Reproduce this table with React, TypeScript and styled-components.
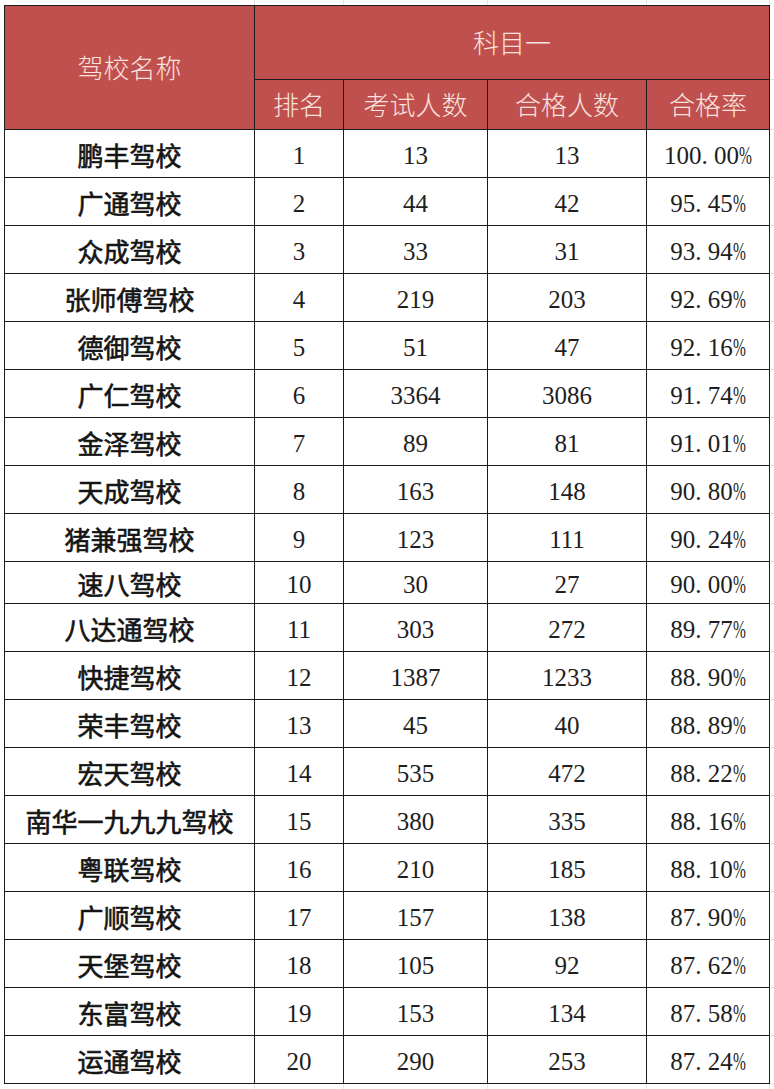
import styled, { createGlobalStyle } from 'styled-components'

// Data
const rows = [
  ['鹏丰驾校', 13, 13, '100.00%'],
  ['广通驾校', 44, 42, '95.45%'],
  ['众成驾校', 33, 31, '93.94%'],
  ['张师傅驾校', 219, 203, '92.69%'],
  ['德御驾校', 51, 47, '92.16%'],
  ['广仁驾校', 3364, 3086, '91.74%'],
  ['金泽驾校', 89, 81, '91.01%'],
  ['天成驾校', 163, 148, '90.80%'],
  ['猪兼强驾校', 123, 111, '90.24%'],
  ['速八驾校', 30, 27, '90.00%'],
  ['八达通驾校', 303, 272, '89.77%'],
  ['快捷驾校', 1387, 1233, '88.90%'],
  ['荣丰驾校', 45, 40, '88.89%'],
  ['宏天驾校', 535, 472, '88.22%'],
  ['南华一九九九驾校', 380, 335, '88.16%'],
  ['粤联驾校', 210, 185, '88.10%'],
  ['广顺驾校', 157, 138, '87.90%'],
  ['天堡驾校', 105, 92, '87.62%'],
  ['东富驾校', 153, 134, '87.58%'],
  ['运通驾校', 290, 253, '87.24%']
] as const

const colWidths = [250, 89, 144, 159, 123]
const rowHeight = (i: number) => (i === 9 ? 42 : 48)
const gutterHeights = [74, 50, ...rows.map((_, i) => rowHeight(i))]

const Percent = ({ value }: { value: string }) => {
  const [int, rest] = value.replace('%', '').split('.')
  return (
    <span>
      {int}
      <Dot>.</Dot>
      {rest}
      <Pct>%</Pct>
    </span>
  )
}

export default function App () {
  return (
    <>
      <GlobalStyle />
      <Page>
        <Gutter>
          {colWidths.map((w) => (
            <GutterCell key={w} $width={w} />
          ))}
        </Gutter>
        <Middle>
          <Table>
            <HeadCell $rows={2}>驾校名称</HeadCell>
            <HeadCell $cols={4}>科目一</HeadCell>
            <HeadCell>排名</HeadCell>
            <HeadCell>考试人数</HeadCell>
            <HeadCell>合格人数</HeadCell>
            <HeadCell>合格率</HeadCell>
            {rows.map(([name, total, passed, rate], i) => (
              <Row key={name}>
                <NameCell>{name}</NameCell>
                <NumCell>{i + 1}</NumCell>
                <NumCell>{total}</NumCell>
                <NumCell>{passed}</NumCell>
                <NumCell>
                  <Percent value={rate} />
                </NumCell>
              </Row>
            ))}
          </Table>
          <RightGutter>
            {gutterHeights.map((h, i) => (
              <Tick key={i} $height={h} />
            ))}
          </RightGutter>
        </Middle>
        <Gutter>
          {colWidths.map((w) => (
            <GutterCell key={w} $width={w} />
          ))}
        </Gutter>
      </Page>
    </>
  )
}

const GlobalStyle = createGlobalStyle`
  html, body {
    margin: 0;
    padding: 0;
    background: #ffffff;
  }
  * {
    box-sizing: border-box;
  }
`

const Page = styled.div`
  display: flex;
  flex-direction: column;
  width: 774px;
  height: 1089px;
  overflow: hidden;
  background: #ffffff;
`

const Gutter = styled.div`
  display: flex;
  height: 5px;
  padding-left: 5px;
  flex-shrink: 0;
  &:last-child {
    height: 6px;
  }
`

const GutterCell = styled.div<{ $width: number }>`
  width: ${(p) => p.$width}px;
  border-right: 1px solid #e4e4e4;
`

const Middle = styled.div`
  display: flex;
  padding-left: 4px;
`

const Table = styled.div`
  display: grid;
  grid-template-columns: ${colWidths.map((w) => `${w}px`).join(' ')};
  grid-template-rows: 74px 50px ${rows.map((_, i) => `${rowHeight(i)}px`).join(' ')};
  border-left: 1px solid #1c1c1c;
  border-top: 1px solid #1c1c1c;
`

const Row = styled.div`
  display: contents;
`

const Cell = styled.div`
  display: flex;
  align-items: center;
  justify-content: center;
  border-right: 1px solid #1c1c1c;
  border-bottom: 1px solid #1c1c1c;
  white-space: nowrap;
`

const HeadCell = styled(Cell)<{ $rows?: number; $cols?: number }>`
  grid-row: span ${(p) => p.$rows ?? 1};
  grid-column: span ${(p) => p.$cols ?? 1};
  background: #c0504d;
  color: #f8e2df;
  font-family: "Noto Sans CJK SC", sans-serif;
  font-size: 26px;
  font-weight: 300;
  padding-bottom: 2px;
`

const NameCell = styled(Cell)`
  color: #141414;
  font-family: "Noto Sans CJK SC", sans-serif;
  font-size: 26px;
  font-weight: 400;
  -webkit-text-stroke: 0.6px #141414;
  padding-top: 2px;
`

const NumCell = styled(Cell)`
  color: #1e1e1e;
  font-family: "Liberation Serif", "Noto Sans CJK SC", serif;
  font-size: 25px;
  padding-top: 4px;
`

const Dot = styled.span`
  display: inline-block;
  width: 0.5em;
  text-align: left;
`

const Pct = styled.span`
  display: inline-block;
  width: 0.52em;
  transform: scaleX(0.62);
  transform-origin: left center;
  white-space: nowrap;
`

const RightGutter = styled.div`
  display: flex;
  flex-direction: column;
  width: 4px;
  padding-top: 1px;
`

const Tick = styled.div<{ $height: number }>`
  height: ${(p) => p.$height}px;
  border-bottom: 1px solid #e4e4e4;
`
